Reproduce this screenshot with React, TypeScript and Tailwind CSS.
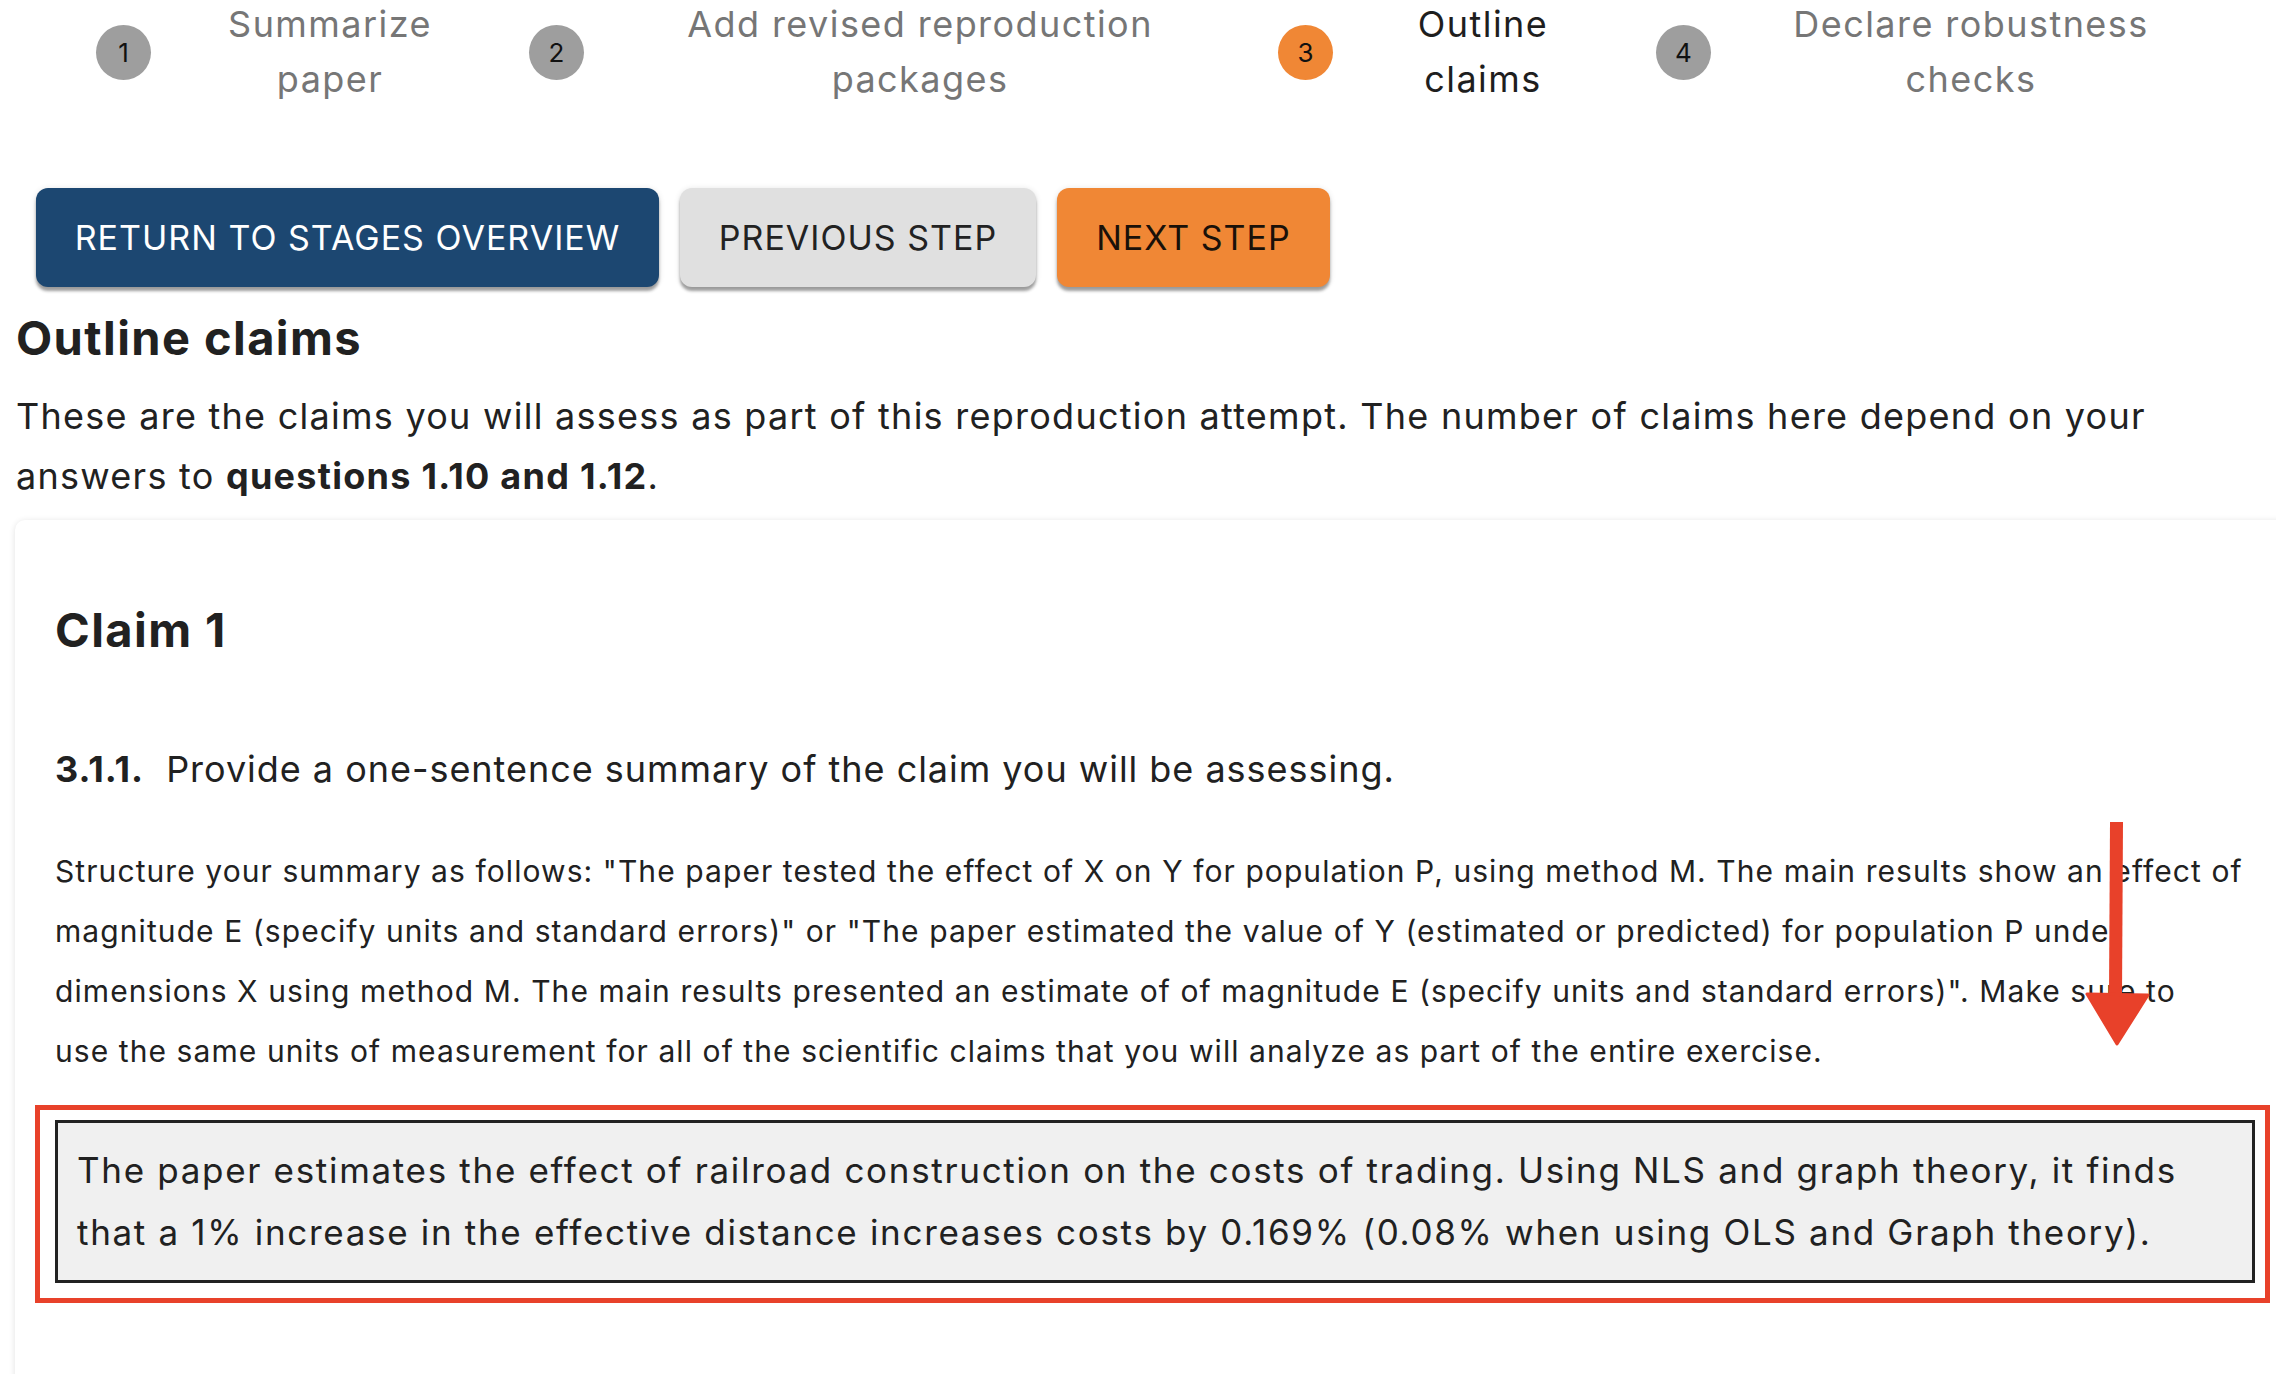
import React from 'react';

interface Step {
  n: number;
  lines: string[];
  labelW: string;
  gap: string;
  active?: boolean;
}

const steps: Step[] = [
  { n: 1, lines: ['Summarize', 'paper'], labelW: 'w-[318px]', gap: 'mr-[40px]' },
  { n: 2, lines: ['Add revised reproduction', 'packages'], labelW: 'w-[632px]', gap: 'mr-[42px]' },
  { n: 3, lines: ['Outline', 'claims'], labelW: 'w-[260px]', gap: 'mr-[43px]', active: true },
  { n: 4, lines: ['Declare robustness', 'checks'], labelW: 'w-[480px]', gap: '' },
];

const Stepper: React.FC = () => (
  <div className="flex items-center pl-[96px] -mt-[3px]">
    {steps.map((s) => (
      <div key={s.n} className={`flex items-center ${s.gap}`}>
        <div
          className={
            s.active
              ? 'w-[55px] h-[55px] shrink-0 rounded-full bg-[#f08735] flex items-center justify-center text-[26px] text-[#111]'
              : 'w-[55px] h-[55px] shrink-0 rounded-full bg-[#9e9e9e] flex items-center justify-center text-[26px] text-[#111]'
          }
        >
          {s.n}
        </div>
        <div
          className={
            s.active
              ? `ml-[20px] ${s.labelW} text-center text-[36px] leading-[55px] tracking-[0.04em] text-[#1e1e1e]`
              : `ml-[20px] ${s.labelW} text-center text-[36px] leading-[55px] tracking-[0.04em] text-[#767676]`
          }
        >
          {s.lines.map((l) => (
            <div key={l}>{l}</div>
          ))}
        </div>
      </div>
    ))}
  </div>
);

const btn =
  'h-[99px] rounded-[12px] flex items-center justify-center text-[34px] uppercase tracking-[0.03em] shadow-[0_4px_3px_rgba(0,0,0,0.35),0_1px_6px_rgba(0,0,0,0.12)]';

const Arrow: React.FC = () => (
  <svg
    className="absolute left-[2080px] top-[818px]"
    width="76"
    height="232"
    viewBox="0 0 76 232"
  >
    <path d="M30 4 L43 4 L42 178 L29 178 Z" fill="#e8412a" />
    <path d="M7 176 L68 177 L37 226 Z" fill="#e8412a" stroke="#e8412a" strokeWidth="3" strokeLinejoin="round" />
  </svg>
);

export default function App() {
  return (
    <div className="relative w-[2276px] h-[1374px] overflow-hidden bg-white text-[#212121] font-['Inter',sans-serif]">
      <Stepper />

      <div className="flex gap-[21px] ml-[36px] mt-[81px]">
        <button className={`${btn} w-[623px] bg-[#1c4771] text-white`}>Return to stages overview</button>
        <button className={`${btn} w-[356px] bg-[#e0e0e0] text-[#222]`}>Previous step</button>
        <button className={`${btn} w-[273px] bg-[#f08735] text-[#1a1109]`}>Next step</button>
      </div>

      <h1 className="ml-[16px] mt-[24px] text-[47px] leading-[54px] font-bold tracking-[0.03em]">Outline claims</h1>
      <p className="ml-[16px] mt-[21px] w-[2200px] text-[36px] leading-[60px] tracking-[0.035em]">
        These are the claims you will assess as part of this reproduction attempt. The number of claims here depend on
        your answers to <b>questions 1.10 and 1.12</b>.
      </p>

      <div className="ml-[15px] mt-[14px] w-[2300px] h-[900px] rounded-[10px] bg-white pl-[40px] pt-[83px] shadow-[0_1px_6px_rgba(0,0,0,0.12)]">
        <div className="w-[2205px]">
          <h2 className="text-[47px] leading-[54px] font-bold tracking-[0.03em]">Claim 1</h2>
          <p className="mt-[87px] text-[36px] leading-[50px] tracking-[0.027em]">
            <b>3.1.1.</b>&nbsp; Provide a one-sentence summary of the claim you will be assessing.
          </p>
          <p className="mt-[47px] text-[30px] leading-[60px] tracking-[0.036em]">
            Structure your summary as follows: "The paper tested the effect of X on Y for population P, using method M.
            The main results show an effect of
            <br />
            magnitude E (specify units and standard errors)" or "The paper estimated the value of Y (estimated or
            predicted) for population P under
            <br />
            dimensions X using method M. The main results presented an estimate of of magnitude E (specify units and
            standard errors)". Make sure to
            <br />
            use the same units of measurement for all of the scientific claims that you will analyze as part of the
            entire exercise.
          </p>
          <div className="mt-[24px] -ml-[20px] w-[2235px] border-[5px] border-[#e8412a] pt-[10px] pl-[15px] pr-[10px] pb-[15px]">
            <div className="border-[3px] border-[#222] bg-[#f0f0f0] px-[19px] pt-[16px] pb-[17px] text-[35px] leading-[62px] tracking-[0.048em]">
              The paper estimates the effect of railroad construction on the costs of trading. Using NLS and graph
              theory, it finds that a 1% increase in the effective distance increases costs by 0.169% (0.08% when using
              OLS and Graph theory).
            </div>
          </div>
        </div>
      </div>

      <Arrow />
    </div>
  );
}
